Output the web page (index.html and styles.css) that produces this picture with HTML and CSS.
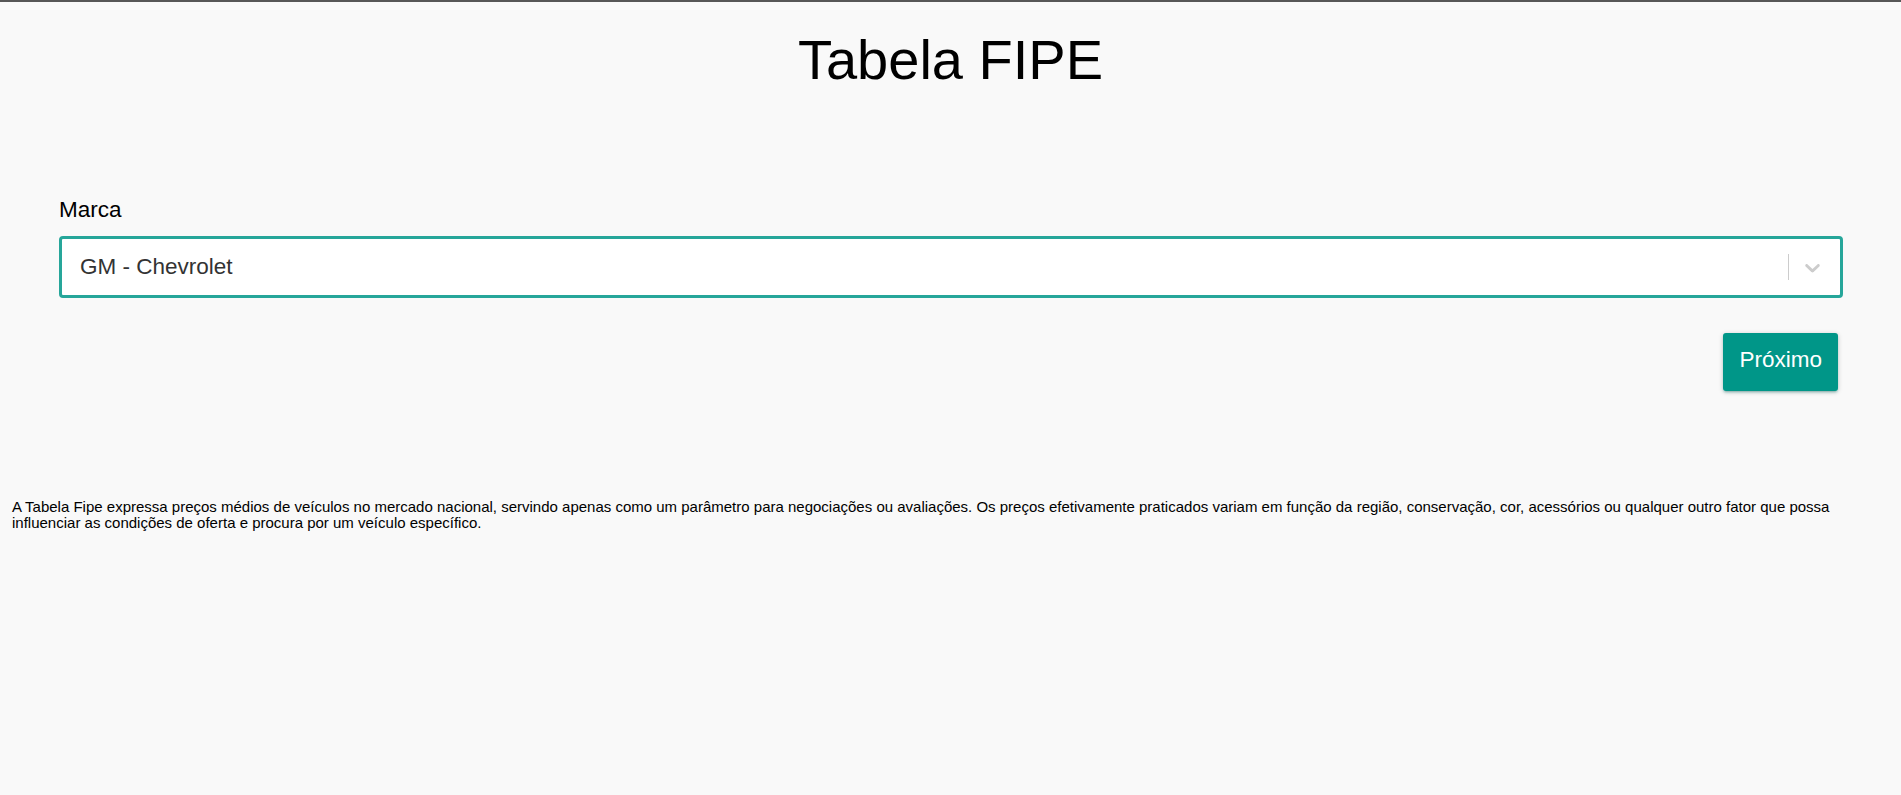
FILE: index.html
```html
<!DOCTYPE html>
<html lang="pt-BR">
<head>
<meta charset="utf-8">
<title>Tabela FIPE</title>
<link rel="stylesheet" href="styles.css">
</head>
<body>
<div class="topbar"></div>
<h1 class="title">Tabela FIPE</h1>
<main class="form">
  <label class="label">Marca</label>
  <div class="select">
    <div class="select-value">GM - Chevrolet</div>
    <div class="select-indicators">
      <span class="select-sep"></span>
      <svg class="select-chevron" width="25" height="25" viewBox="0 0 20 20" aria-hidden="true"><path fill="#cccccc" d="M4.516 7.548c0.436-0.446 1.043-0.481 1.576 0l3.908 3.747 3.908-3.747c0.533-0.481 1.141-0.446 1.574 0 0.436 0.445 0.408 1.197 0 1.615-0.406 0.418-4.695 4.502-4.695 4.502-0.217 0.223-0.502 0.335-0.787 0.335s-0.57-0.112-0.789-0.335c0 0-4.287-4.084-4.695-4.502s-0.436-1.170 0-1.615z"/></svg>
    </div>
  </div>
  <div class="actions">
    <button class="btn" type="button">Próximo</button>
  </div>
</main>
<p class="disclaimer">A Tabela Fipe expressa preços médios de veículos no mercado nacional, servindo apenas como um parâmetro para negociações ou avaliações. Os preços efetivamente praticados variam em função da região, conservação, cor, acessórios ou qualquer outro fator que possa influenciar as condições de oferta e procura por um veículo específico.</p>
</body>
</html>
```

FILE: styles.css
```css
html, body {
  margin: 0;
  padding: 0;
}
body {
  background: #f9f9f9;
  font-family: "Liberation Sans", Arial, sans-serif;
  color: #000;
}
.topbar {
  height: 2px;
  background: #575757;
}
.title {
  margin: 25px 0 0;
  font-size: 56px;
  font-weight: 400;
  line-height: normal;
  text-align: center;
}
.form {
  margin: 105px 58px 0 59px;
  display: flex;
  flex-direction: column;
}
.label {
  font-size: 22.5px;
  line-height: 26px;
}
.select {
  margin-top: 13px;
  height: 62px;
  box-sizing: border-box;
  border: 3px solid #26a69a;
  border-radius: 4px;
  background: #fff;
  display: flex;
  align-items: center;
}
.select-value {
  flex: 1;
  padding-left: 18px;
  font-size: 22.5px;
  line-height: 26px;
  color: #333;
}
.select-indicators {
  display: flex;
  align-items: center;
  gap: 11px;
  padding-right: 15px;
}
.select-sep {
  width: 1px;
  height: 26px;
  background: #cccccc;
}
.select-chevron {
  display: block;
}
.actions {
  display: flex;
  justify-content: flex-end;
  margin-top: 35px;
}
.btn {
  margin-right: 5px;
  height: 58px;
  box-sizing: border-box;
  padding: 14px 16px 18px;
  border: none;
  border-radius: 3px;
  background: #009688;
  color: #fff;
  font-family: "Liberation Sans", Arial, sans-serif;
  font-size: 22.5px;
  line-height: 26px;
  box-shadow: 0 2px 2px 0 rgba(0,150,136,.18), 0 3px 1px -2px rgba(0,0,0,.12), 0 1px 5px 0 rgba(0,0,0,.2);
  cursor: pointer;
}
.disclaimer {
  margin: 108px 0 0;
  padding: 0 11px 0 12px;
  font-size: 15px;
  line-height: 16px;
}
```
